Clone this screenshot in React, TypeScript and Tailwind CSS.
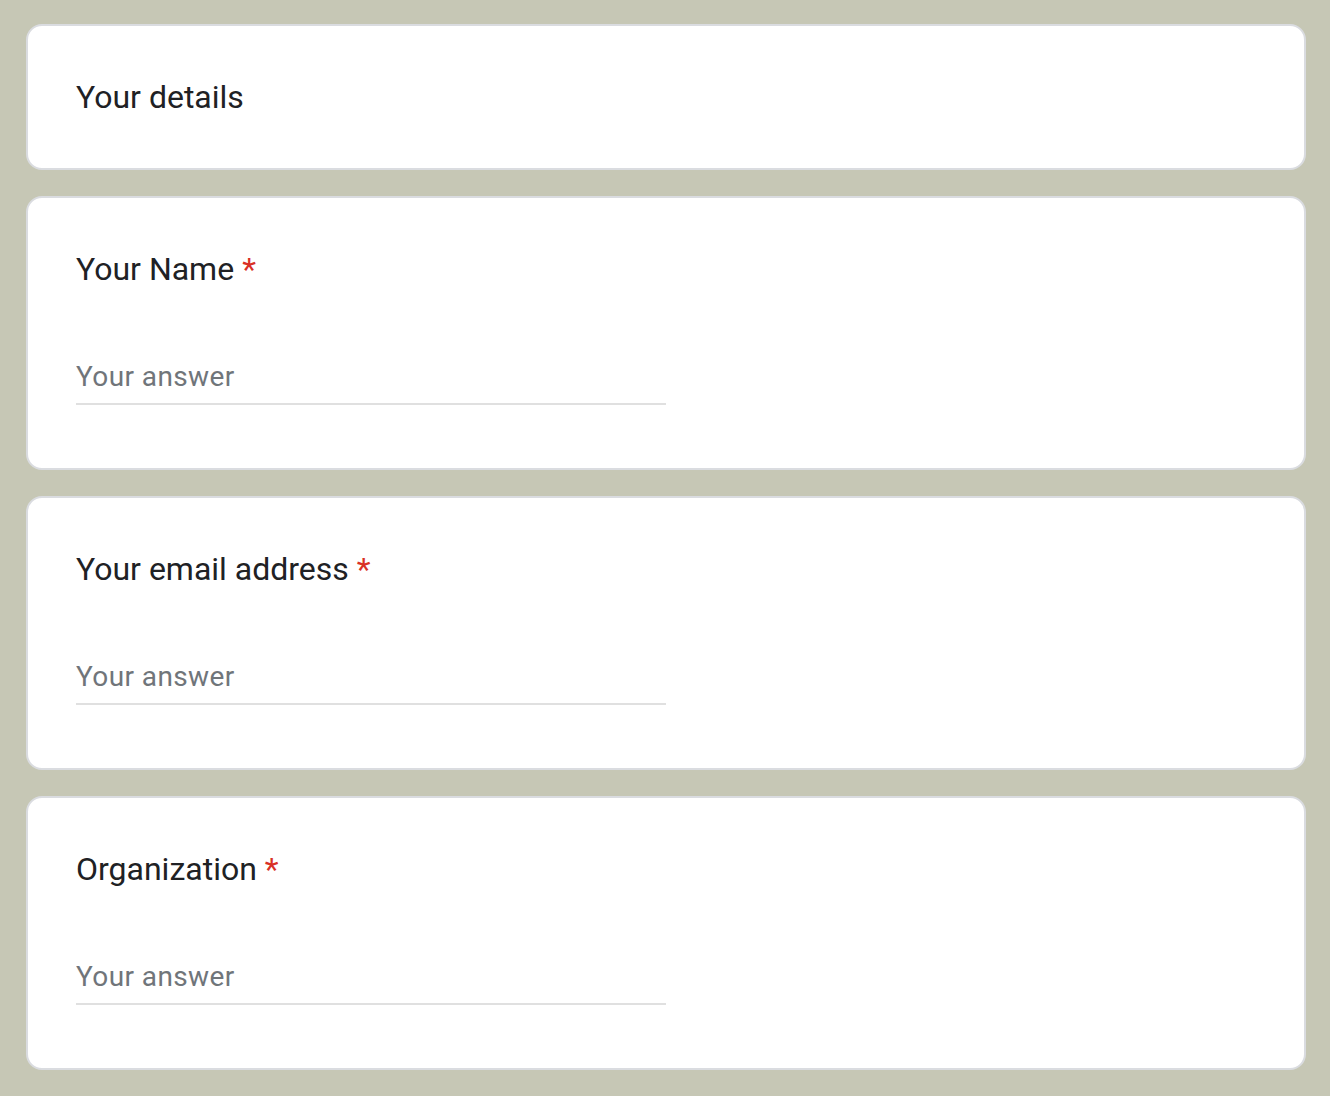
import React from 'react';

const questions = ['Your Name', 'Your email address', 'Organization'];

function QuestionCard({ title }: { title: string }) {
  return (
    <div className="bg-white border-2 border-[#dadce0] rounded-[16px] w-[1280px] pt-[47px] pb-[63px] px-[48px]">
      <div className="text-[32px] leading-[48px] text-[#202124]">
        {title}
        <span className="text-[#d93025] pl-[8px]">*</span>
      </div>
      <input
        type="text"
        placeholder="Your answer"
        className="block mt-[63px] w-[590px] h-[49px] pb-[7px] pt-0 px-0 text-[28px] leading-[40px] tracking-[0.4px] text-[#202124] placeholder:text-[#70757a] border-0 border-b-2 border-[#e0e0e0] outline-none bg-transparent"
        style={{ fontFamily: 'Roboto, "Liberation Sans", sans-serif' }}
      />
    </div>
  );
}

export default function App() {
  return (
    <div
      className="bg-[#c6c7b5] h-[1096px] overflow-hidden pt-[24px] pl-[26px] flex flex-col gap-[26px]"
      style={{ fontFamily: 'Roboto, "Liberation Sans", sans-serif' }}
    >
      {/* Section header */}
      <div className="bg-white border-2 border-[#dadce0] rounded-[16px] w-[1280px] py-[47px] px-[48px]">
        <div className="text-[32px] leading-[48px] text-[#202124]">Your details</div>
      </div>

      {questions.map((q) => (
        <QuestionCard key={q} title={q} />
      ))}

      {/* next card, just peeking in at the bottom edge */}
      <div className="shrink-0 bg-white border-2 border-[#dadce0] rounded-[16px] w-[1280px] h-[274px]" />
    </div>
  );
}
